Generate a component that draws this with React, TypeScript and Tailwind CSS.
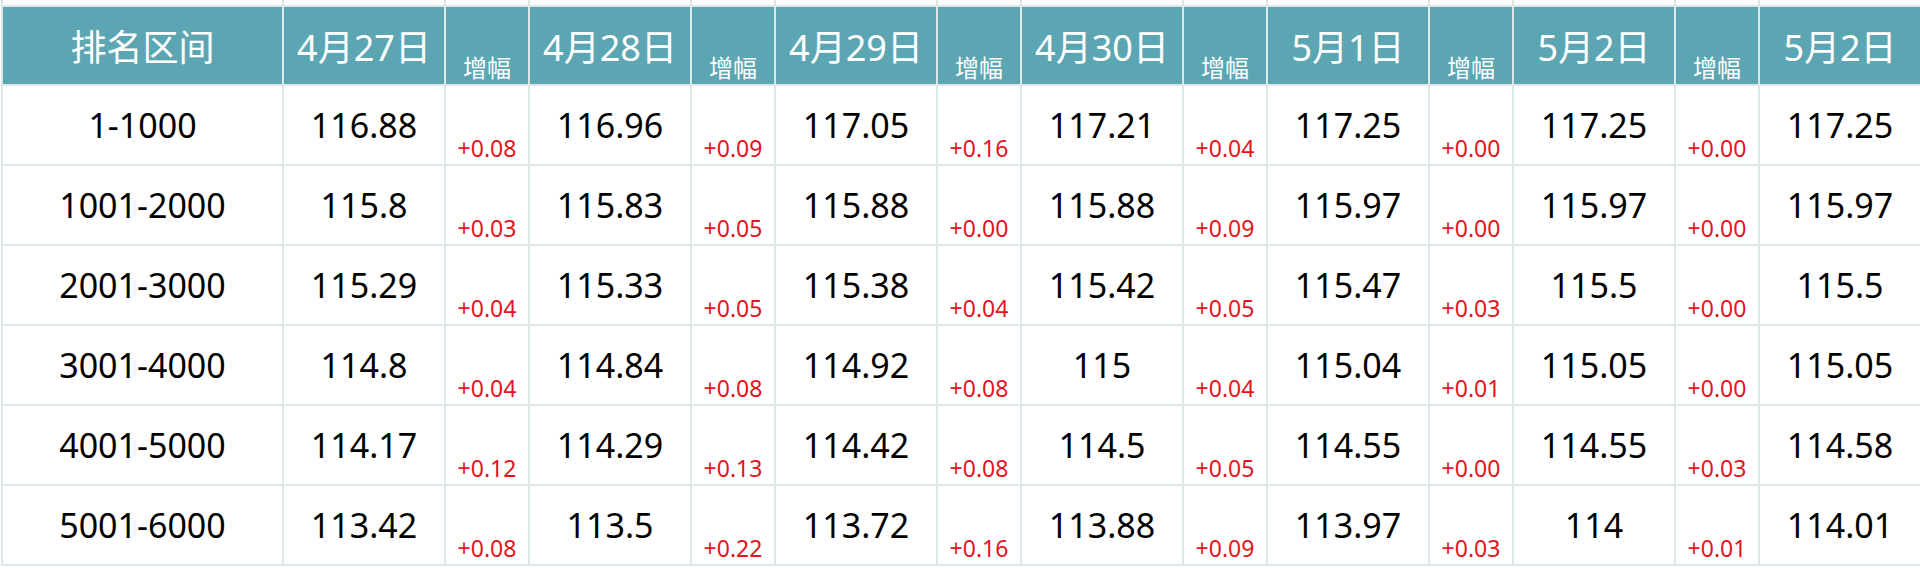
import React from "react"

const headers = ["4月27日", "4月28日", "4月29日", "4月30日", "5月1日", "5月2日", "5月2日"]

const rows: { range: string; values: string[]; changes: string[] }[] = [
  {
    range: "1-1000",
    values: ["116.88", "116.96", "117.05", "117.21", "117.25", "117.25", "117.25"],
    changes: ["+0.08", "+0.09", "+0.16", "+0.04", "+0.00", "+0.00"],
  },
  {
    range: "1001-2000",
    values: ["115.8", "115.83", "115.88", "115.88", "115.97", "115.97", "115.97"],
    changes: ["+0.03", "+0.05", "+0.00", "+0.09", "+0.00", "+0.00"],
  },
  {
    range: "2001-3000",
    values: ["115.29", "115.33", "115.38", "115.42", "115.47", "115.5", "115.5"],
    changes: ["+0.04", "+0.05", "+0.04", "+0.05", "+0.03", "+0.00"],
  },
  {
    range: "3001-4000",
    values: ["114.8", "114.84", "114.92", "115", "115.04", "115.05", "115.05"],
    changes: ["+0.04", "+0.08", "+0.08", "+0.04", "+0.01", "+0.00"],
  },
  {
    range: "4001-5000",
    values: ["114.17", "114.29", "114.42", "114.5", "114.55", "114.55", "114.58"],
    changes: ["+0.12", "+0.13", "+0.08", "+0.05", "+0.00", "+0.03"],
  },
  {
    range: "5001-6000",
    values: ["113.42", "113.5", "113.72", "113.88", "113.97", "114", "114.01"],
    changes: ["+0.08", "+0.22", "+0.16", "+0.09", "+0.03", "+0.01"],
  },
]

export default function App() {
  return (
    <div className="w-[1920px] h-[568px] bg-white overflow-hidden font-['Noto_Sans','Noto_Sans_CJK_SC',sans-serif]">
      <table className="table-fixed border-collapse w-[1918px] ml-px">
        <colgroup>
          <col className="w-[281px]" />
          {headers.map((h, i) => (
            <React.Fragment key={i}>
              <col className="w-[162px]" />
              {i < headers.length - 1 && <col className="w-[84px]" />}
            </React.Fragment>
          ))}
        </colgroup>
        <tbody>
          {/* cut-off row above the header */}
          <tr className="h-[6px]">
            {Array.from({ length: 14 }).map((_, i) => (
              <td key={i} className="border-x-2 border-[#dde7e5] p-0" />
            ))}
          </tr>
          <tr className="h-[79px] bg-[#5ca6b3] text-white">
            <td className="border-2 border-[#dde7e5] text-center text-[36px] leading-none pt-1 p-0">排名区间</td>
            {headers.map((h, i) => (
              <React.Fragment key={i}>
                <td className="border-2 border-[#dde7e5] text-center text-[36px] leading-none pt-1 p-0">{h}</td>
                {i < headers.length - 1 && (
                  <td className="border-2 border-[#dde7e5] text-center align-bottom text-[24px] leading-none pb-[4px] p-0">
                    增幅
                  </td>
                )}
              </React.Fragment>
            ))}
          </tr>
          {rows.map((r) => (
            <tr key={r.range} className="h-[80px] text-black">
              <td className="border-2 border-[#dde7e5] text-center text-[34px] leading-none p-0">{r.range}</td>
              {r.values.map((v, i) => (
                <React.Fragment key={i}>
                  <td className="border-2 border-[#dde7e5] text-center text-[34px] leading-none p-0">{v}</td>
                  {i < r.changes.length && (
                    <td className="border-2 border-[#dde7e5] text-center align-bottom text-[23px] leading-none text-[#e5131b] pb-[4px] p-0">
                      {r.changes[i]}
                    </td>
                  )}
                </React.Fragment>
              ))}
            </tr>
          ))}
        </tbody>
      </table>
    </div>
  )
}
